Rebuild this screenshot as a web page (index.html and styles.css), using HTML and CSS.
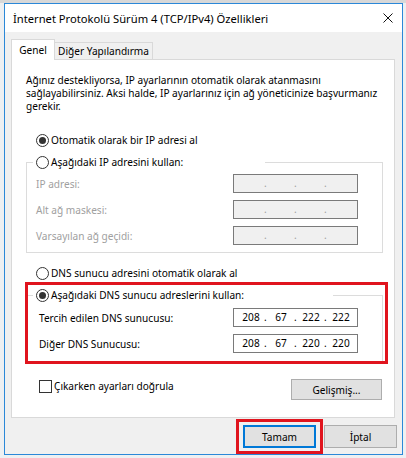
FILE: index.html
```html
<!DOCTYPE html>
<html lang="tr">
<head>
  <meta charset="UTF-8">
  <meta name="viewport" content="width=device-width, initial-scale=1.0">
  <title>İnternet Protokolü Sürüm 4 (TCP/IPv4) Özellikleri</title>
  <link rel="stylesheet" href="styles.css">
</head>
<body>

  <div class="behind"></div>

  <div class="window">
    <!-- Title bar -->
    <div class="titlebar">
      <span class="title">İnternet Protokolü Sürüm 4 (TCP/IPv4) Özellikleri</span>
      <svg class="close" width="10" height="10" viewBox="0 0 10 10">
        <path d="M0.5 0.5L9.5 9.5M9.5 0.5L0.5 9.5" stroke="#111" stroke-width="1"/>
      </svg>
    </div>

    <div class="content">
      <div class="tabs">
        <div class="tab active">Genel</div>
        <div class="tab">Diğer Yapılandırma</div>
      </div>

      <div class="panel">
        <p class="intro">Ağınız destekliyorsa, IP ayarlarının otomatik olarak atanmasını<br>sağlayabilirsiniz. Aksi halde, IP ayarlarınız için ağ yöneticinize başvurmanız<br>gerekir.</p>

        <label class="option first"><input type="radio" name="ip" checked>Otomatik olarak bir IP adresi al</label>

        <fieldset class="group disabled">
          <legend class="legend-ip"><label class="option"><input type="radio" name="ip">Aşağıdaki IP adresini kullan:</label></legend>
          <div class="row">
            <span>IP adresi:</span>
            <div class="ipbox"><span></span><span></span><span></span><span></span></div>
          </div>
          <div class="row">
            <span>Alt ağ maskesi:</span>
            <div class="ipbox"><span></span><span></span><span></span><span></span></div>
          </div>
          <div class="row">
            <span>Varsayılan ağ geçidi:</span>
            <div class="ipbox"><span></span><span></span><span></span><span></span></div>
          </div>
        </fieldset>

        <label class="option dns-auto"><input type="radio" name="dns">DNS sunucu adresini otomatik olarak al</label>

        <div class="highlight">
          <fieldset class="group dns">
            <legend class="legend-dns"><label class="option"><input type="radio" name="dns" checked>Aşağıdaki DNS sunucu adreslerini kullan:</label></legend>
            <div class="row">
              <span>Tercih edilen DNS sunucusu:</span>
              <div class="ipbox"><span>208</span><span>67</span><span>222</span><span>222</span></div>
            </div>
            <div class="row">
              <span>Diğer DNS Sunucusu:</span>
              <div class="ipbox"><span>208</span><span>67</span><span>220</span><span>220</span></div>
            </div>
          </fieldset>
        </div>

        <div class="bottom-row">
          <label class="check"><input type="checkbox">Çıkarken ayarları doğrula</label>
          <button class="btn advanced">Gelişmiş...</button>
        </div>
      </div>
    </div>

    <div class="footer">
      <div class="highlight-btn">
        <button class="btn primary">Tamam</button>
      </div>
      <button class="btn cancel">İptal</button>
    </div>
  </div>

</body>
</html>
```

FILE: styles.css
```css
/* General styles */
body {
  margin: 0;
  background-color: #eef0f2;
  font-family: "Noto Sans", "DejaVu Sans", sans-serif;
  font-size: 10.1px;
  color: #000;
  width: 406px;
  height: 458px;
  overflow: hidden;
}

.behind {
  height: 3px;
  background-color: #d8d8d8;
}

/* Dialog window */
.window {
  box-sizing: border-box;
  margin-left: 4px;
  width: 399px;
  height: 452px;
  border: 1px solid #2b88d8;
  background-color: #f0f0f0;
}

.titlebar {
  height: 28px;
  background-color: #ffffff;
  display: flex;
  align-items: center;
  justify-content: space-between;
  padding: 0 9px 0 8px;
}

.title {
  font-size: 11.2px;
}

.content {
  padding: 7px 7px 0 6px;
}

/* Tabs */
.tabs {
  display: flex;
  align-items: flex-end;
  height: 20px;
}

.tab {
  box-sizing: border-box;
  height: 17px;
  line-height: 16px;
  padding: 0;
  border: 1px solid #d9d9d9;
  border-left: none;
  border-bottom: none;
  width: 98px;
  text-align: center;
  white-space: nowrap;
}

.tab.active {
  height: 21px;
  line-height: 20px;
  width: 44px;
  margin-bottom: -1px;
  border-left: 1px solid #d9d9d9;
  background-color: #ffffff;
  position: relative;
  z-index: 1;
}

.panel {
  box-sizing: border-box;
  height: 359px;
  border: 1px solid #d9d9d9;
  background-color: #ffffff;
  padding: 14px 11px 0 14px;
}

.intro {
  margin: 0;
  line-height: 13px;
  white-space: nowrap;
}

/* Radio and check options */
.option, .check {
  display: flex;
  align-items: center;
  height: 16px;
  white-space: nowrap;
}

.option input, .check input {
  appearance: none;
  margin: 0 2px 0 0;
  width: 13px;
  height: 13px;
  border: 1px solid #333;
  background: #fff;
  box-sizing: border-box;
}

.option input {
  border-radius: 50%;
  display: grid;
  place-content: center;
}

.option input:checked::before {
  content: "";
  width: 7px;
  height: 7px;
  border-radius: 50%;
  background: #333;
}

.option.first {
  margin: 19px 0 0 10px;
}

.option.dns-auto {
  margin: 12px 0 0 10px;
}

/* Group boxes */
.group {
  margin: 6px 0 0 0;
  padding: 4px 24px 7px 9px;
  border: 1px solid #dcdcdc;
  min-inline-size: 0;
}

.group legend {
  padding: 0 0 0 3px;
  margin-left: -3px;
  height: 16px;
}

.legend-ip {
  width: 229px;
}

.row {
  display: flex;
  align-items: center;
  justify-content: space-between;
  height: 19px;
  margin-top: 7px;
}

.row:first-of-type {
  margin-top: 0;
}

.disabled .row span {
  color: #a0a0a0;
}

.ipbox {
  box-sizing: border-box;
  width: 125px;
  height: 19px;
  border: 1px solid #7a7a7a;
  background-color: #ffffff;
  display: flex;
  padding-left: 2px;
}

.ipbox span {
  width: 30px;
  text-align: center;
  line-height: 17px;
  position: relative;
}

.ipbox span + span::before {
  content: ".";
  position: absolute;
  left: -2px;
  color: #000;
}

.disabled .ipbox {
  background-color: #f0f0f0;
}

.disabled .ipbox span + span::before {
  color: #a0a0a0;
}

/* Red annotation boxes */
.highlight {
  margin: 1px -5px 0 -1px;
  border: 3px solid #e0141e;
  padding: 0 2px 0 0;
}

.group.dns {
  margin: 2px 0 0 0;
  border-left: none;
  border-bottom: none;
  padding: 5px 24px 8px 11px;
}

.legend-dns {
  width: 297px;
  margin-left: -6px !important;
}

.bottom-row {
  display: flex;
  justify-content: space-between;
  align-items: flex-start;
  margin-top: 14px;
}

.check {
  margin-left: 13px;
}

/* Buttons */
.btn {
  box-sizing: border-box;
  font-family: inherit;
  font-size: inherit;
  background-color: #e1e1e1;
  border: 1px solid #adadad;
  padding: 0;
  color: #000;
}

.advanced {
  width: 91px;
  height: 21px;
  margin: 1px 1px 0 0;
}

.footer {
  display: flex;
  justify-content: flex-end;
  align-items: center;
  margin-top: 1px;
  padding-right: 5px;
}

.highlight-btn {
  border: 3px solid #e0141e;
  padding: 3px 4px;
  display: flex;
}

.primary, .cancel {
  width: 73px;
  height: 23px;
}

.primary {
  border: 2px solid #0078d7;
}

.cancel {
  margin-left: 1px;
}
```
